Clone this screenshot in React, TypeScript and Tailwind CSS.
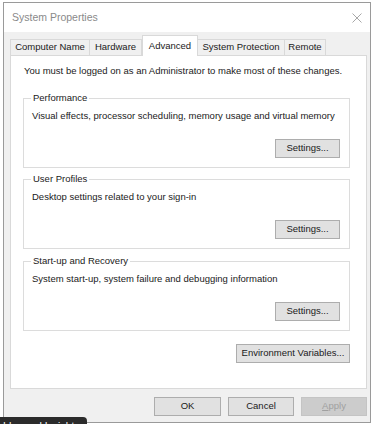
import React from "react";

const font = { fontFamily: '"Liberation Sans", Arial, sans-serif' };

function Btn({ children, className = "" }: { children: React.ReactNode; className?: string }) {
  return (
    <div
      className={`flex items-center justify-center h-[19px] border border-[#adadad] bg-[#e1e1e1] text-[9.5px] text-[#1a1a1a] ${className}`}
    >
      {children}
    </div>
  );
}

function Group({ title, desc }: { title: string; desc: string }) {
  return (
    <div className="relative h-[70px] w-[327px] border border-[#dcdcdc] flex flex-col">
      <div className="absolute -top-[7px] left-[7px] bg-white px-[2px] text-[9.5px] leading-[12px] text-[#1a1a1a]">
        {title}
      </div>
      <div className="pl-[8px] pt-[11px] text-[9.5px] leading-[12px] text-[#1a1a1a]">{desc}</div>
      <div className="flex justify-end pr-[9px] mt-[17px]">
        <Btn className="w-[65px]">Settings...</Btn>
      </div>
    </div>
  );
}

export default function App() {
  const tabs = [
    { label: "Computer Name", w: 80 },
    { label: "Hardware", w: 52 },
    { label: "Advanced", w: 56, sel: true },
    { label: "System Protection", w: 87 },
    { label: "Remote", w: 41 },
  ];
  return (
    <div className="relative w-[374px] h-[424px] overflow-hidden bg-white" style={font}>
      <div className="pl-[3px] pt-[2px]">
        <div className="w-[368px] h-[421px] border border-[#9a9a9a] bg-[#f0f0f0] flex flex-col">
          {/* title bar */}
          <div className="h-[29px] bg-white flex items-center justify-between pl-[8px] pr-[6px]">
            <span className="text-[10.5px] text-[#8a8a8a]">System Properties</span>
            <svg width="10" height="10" viewBox="0 0 10 10" className="mr-[2px]">
              <path d="M0.5 0.5L9.5 9.5M9.5 0.5L0.5 9.5" stroke="#a8a8a8" strokeWidth="1" fill="none" />
            </svg>
          </div>
          {/* tabs */}
          <div className="pl-[6px] pt-[4px]">
            <div className="flex items-end h-[19px]">
              {tabs.map((t, i) =>
                t.sel ? (
                  <div
                    key={t.label}
                    className="relative z-10 -mb-px h-[21px] bg-white border border-b-0 border-[#d9d9d9] flex items-start justify-center pt-[3px] text-[9.5px] text-[#1a1a1a]"
                    style={{ width: t.w }}
                  >
                    {t.label}
                  </div>
                ) : (
                  <div
                    key={t.label}
                    className={`h-[16px] bg-[#f0f0f0] border-t border-r border-[#d9d9d9] ${i === 0 ? "border-l" : ""} flex items-center justify-center text-[9.5px] text-[#1a1a1a]`}
                    style={{ width: t.w }}
                  >
                    {t.label}
                  </div>
                )
              )}
            </div>
            {/* panel */}
            <div className="w-[357px] h-[334px] bg-white border border-[#d9d9d9] flex flex-col items-start pl-[12px]">
              <div className="pl-[1px] pt-[9px] text-[9.5px] leading-[12px] text-[#1a1a1a]">
                You must be logged on as an Administrator to make most of these changes.
              </div>
              <div className="mt-[21px]">
                <Group title="Performance" desc="Visual effects, processor scheduling, memory usage and virtual memory" />
              </div>
              <div className="mt-[11px]">
                <Group title="User Profiles" desc="Desktop settings related to your sign-in" />
              </div>
              <div className="mt-[12px]">
                <Group title="Start-up and Recovery" desc="System start-up, system failure and debugging information" />
              </div>
              <div className="w-[327px] flex justify-end mt-[13px]">
                <Btn className="w-[114px]">Environment Variables...</Btn>
              </div>
            </div>
            {/* footer */}
            <div className="w-[357px] flex justify-end gap-[7px] mt-[8px]">
              <Btn className="w-[67px]">OK</Btn>
              <Btn className="w-[66px]">Cancel</Btn>
              <div className="flex items-center justify-center h-[19px] w-[66px] border border-[#c4c4c4] bg-[#cccccc] text-[9.5px] text-[#a0a0a0]">
                <span>
                  <span className="underline">A</span>pply
                </span>
              </div>
            </div>
          </div>
        </div>
      </div>
      {/* tooltip fragment */}
      <div className="absolute left-0 top-[417px] w-[87px] h-[7px] bg-[#2b2b2b] rounded-tr-[4px] overflow-hidden pl-[3px] pt-[5px]">
        <div className="text-[10px] leading-[10px] text-white">Idea and Insights</div>
      </div>
    </div>
  );
}
